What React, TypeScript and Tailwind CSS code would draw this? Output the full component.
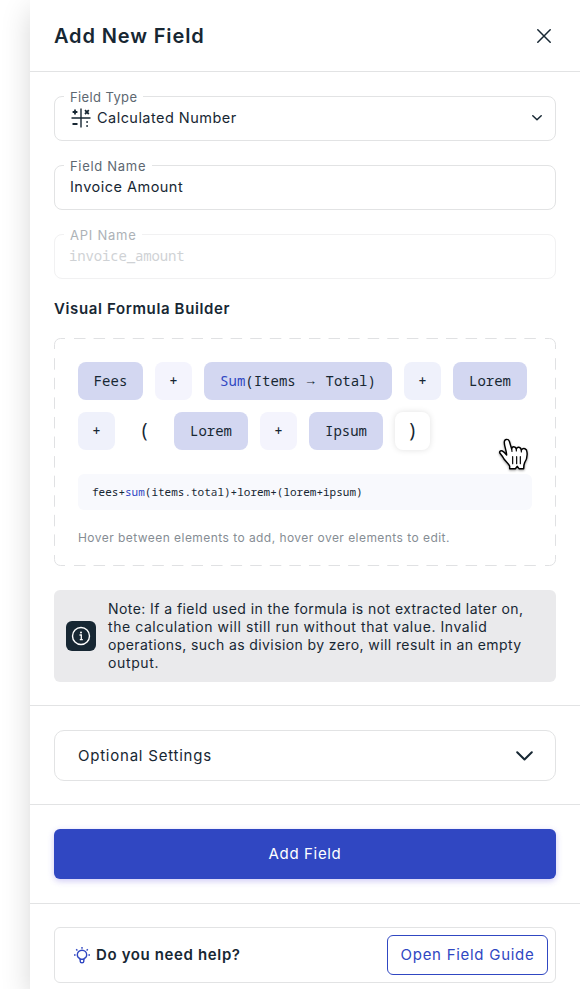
import type { ReactNode } from "react";

function CalcIcon() {
  return (
    <svg width="20" height="20" viewBox="0 0 20 20" fill="none" stroke="#172733" strokeWidth="1.4">
      <path d="M10 0.5V19.5M0.5 10H19.5" />
      <path d="M4 1.6V6.400M1.600 4H6.400M14 2.200L17.800 6M17.800 2.200L14 6M1.500 16H6.500" strokeWidth="1.8" />
      <path d="M15.200 14H17M15.200 18H17" strokeWidth="1.6" />
    </svg>
  );
}

function BulbIcon() {
  return (
    <svg width="16" height="17" viewBox="0 0 16 17" fill="none" stroke="#3047c2" strokeWidth="1.4">
      <path d="M6 12.2V11.6C4.3 10.8 3.3 9.4 3.3 7.9a4.7 4.7 0 0 1 9.4 0c0 1.500-1 2.900-2.700 3.700v0.600Z" />
      <path d="M6.200 12.500v1.700c0 1 .7 1.600 1.800 1.600s1.800-.6 1.800-1.600v-1.700" />
      <path d="M8 0V1.700M0 8H1.600M14.400 8H16M2.200 2.200L3.400 3.400M13.800 2.200L12.600 3.400" />
    </svg>
  );
}

function InfoIcon() {
  return (
    <svg width="20" height="20" viewBox="0 0 20 20" fill="none" stroke="#fff" strokeWidth="1.4">
      <circle cx="10" cy="10" r="8.500" />
      <path d="M8.500 9H10.300V13.500M8.800 13.700H11.800" strokeWidth="1.300" />
      <circle cx="10" cy="6.500" r="1" fill="#fff" stroke="none" />
    </svg>
  );
}

function HandCursor() {
  return (
    <svg className="absolute left-[436px] top-[92px] drop-shadow-[0_1px_1px_rgba(0,0,0,0.4)]" width="50" height="50" viewBox="0 0 150 150" fill="none" stroke="#000" strokeLinecap="round" strokeLinejoin="round">
      <path
        d="M59 116V108C54 99 46 93 42 87C38 80 35 76 30 70C27 65 31 61 37 63C42 65 46 70 50 75C50 62 42 48 43 36C43 26 55 26 58 34L65 57C66 48 76 48 79 57C82 49 92 50 94 60C100 52 111 56 111 67C113 82 109 90 104 98C101 104 101 108 101 116H87L82 109L76 116Z"
        fill="#fff"
        strokeWidth="4.300"
      />
      <path d="M79 57V63M94 60V66M65 57L66 64" strokeWidth="3.500" />
      <path d="M68 80V101M80 80V101M91 80V101" strokeWidth="3.500" />
    </svg>
  );
}

function DashedFrame() {
  return (
    <svg className="pointer-events-none absolute inset-0" width="502" height="228" viewBox="0 0 502 228" fill="none" stroke="#e0e1e3">
      <path d="M0.500 11V6.500A6 6 0 0 1 6.500 0.500H11M491 0.500H495.500A6 6 0 0 1 501.500 6.500V11M501.500 217V221.500A6 6 0 0 1 495.500 227.500H491M11 227.500H6.500A6 6 0 0 1 0.500 221.500V217" />
      <path d="M20 0.500H482M20 227.500H482M0.500 20.200V208M501.500 20.200V208" strokeDasharray="11.500 8.080" />
    </svg>
  );
}

function Field({ label, labelClass, faded, children }: { label: string; labelClass: string; faded?: boolean; children: ReactNode }) {
  return (
    <div className={`relative flex h-[45px] items-center rounded-lg border px-[15px] pb-0.5 ${faded ? "border-[#f1f1f2]" : "border-[#e2e3e4]"}`}>
      <span className={`absolute -top-[9px] left-[9px] bg-white px-1.5 text-[13px] leading-[19px] whitespace-nowrap ${faded ? "text-[#adb2b7]" : "text-[#5d6771]"} ${labelClass}`}>{label}</span>
      {children}
    </div>
  );
}

const mono = "font-['Noto_Sans_Mono','DejaVu_Sans_Mono',monospace]";

function Chip({ className, children }: { className: string; children: ReactNode }) {
  return <span className={`flex h-[38px] items-center justify-center rounded-lg whitespace-pre ${className}`}>{children}</span>;
}

export default function App() {
  return (
    <div className="h-[989px] w-[580px] overflow-hidden bg-white pl-[30px] font-['Inter','Liberation_Sans',sans-serif] text-[#172733]">
      <div className="h-full bg-white shadow-[0_10px_28px_rgba(0,0,0,0.16)]">
        <header className="flex h-[72px] items-center justify-between border-b border-[#e2e3e4] px-6">
          <h1 className="text-xl font-semibold tracking-[0.87px]">Add New Field</h1>
          <svg className="mr-[5px]" width="14" height="14" viewBox="0 0 14 14" stroke="#172733" strokeWidth="1.500" strokeLinecap="round">
            <path d="M0.800 0.800L13.200 13.200M13.200 0.800L0.800 13.200" />
          </svg>
        </header>

        <section className="flex h-[634px] flex-col border-b border-[#e2e3e4] px-6 pt-6">
          <div className="flex flex-col gap-6">
            <Field label="Field Type" labelClass="tracking-[0.38px]">
              <span className="ml-px"><CalcIcon /></span>
              <span className="ml-1.5 text-[14.5px] tracking-[0.46px]">Calculated Number</span>
              <svg className="mr-[-2px] ml-auto" width="10" height="6" viewBox="0 0 10 6" fill="none" stroke="#172733" strokeWidth="1.500" strokeLinecap="round" strokeLinejoin="round">
                <path d="M0.800 0.800L5 4.800L9.200 0.800" />
              </svg>
            </Field>
            <Field label="Field Name" labelClass="tracking-[0.7px]">
              <span className="text-[14.5px] tracking-[0.48px]">Invoice Amount</span>
            </Field>
            <Field label="API Name" labelClass="tracking-[0.75px]" faded>
              <span className={`-ml-px text-sm tracking-[-0.15px] text-[#cfd2d5] ${mono}`}>invoice_amount</span>
            </Field>
          </div>

          <h2 className="mt-[18px] text-[15px] leading-6 font-semibold tracking-[0.63px]">Visual Formula Builder</h2>

          <div className="relative mt-[17px] flex h-[228px] flex-col px-6 pt-6">
            <DashedFrame />
            <div className={`flex flex-col gap-3 ${mono}`}>
              <div className="flex gap-3">
                <Chip className="w-[65px] bg-[#d3d7f1] text-sm">Fees</Chip>
                <Chip className="w-[37px] bg-[#f4f4fd] text-sm font-medium">+</Chip>
                <Chip className="w-[188px] bg-[#d3d7f1] text-sm"><span className="text-[#3047c2]">Sum</span>(Items <span className="inline-block w-[13px] text-center font-['Liberation_Sans','DejaVu_Sans',sans-serif] text-[13px]">→</span> Total)</Chip>
                <Chip className="w-[37px] bg-[#eff1fb] text-sm font-medium">+</Chip>
                <Chip className="w-[74px] bg-[#d3d7f1] text-sm">Lorem</Chip>
              </div>
              <div className="flex gap-3">
                <Chip className="w-[37px] bg-[#eff1fb] text-sm font-medium">+</Chip>
                <Chip className="w-[35px] pb-0.5 text-[19px]">(</Chip>
                <Chip className="w-[74px] bg-[#d3d7f1] text-sm">Lorem</Chip>
                <Chip className="w-[37px] bg-[#f4f4fd] text-sm font-medium">+</Chip>
                <Chip className="w-[74px] bg-[#d3d7f1] text-sm">Ipsum</Chip>
                <Chip className="w-[35px] bg-white pb-0.5 text-[19px] shadow-[0_0_6px_rgba(0,0,0,0.12)]">)</Chip>
              </div>
            </div>
            <div className={`mt-6 flex h-9 items-center rounded-md bg-[#f8f9fd] px-3.5 text-[11px] ${mono}`}>
              fees+<span className="text-[#3047c2]">sum</span>(items.total)+lorem+(lorem+ipsum)
            </div>
            <p className="mt-[19px] text-xs leading-[18px] tracking-[0.45px] whitespace-nowrap text-[#868d94]">Hover between elements to add, hover over elements to edit.</p>
            <HandCursor />
          </div>

          <div className="mt-6 flex h-[92px] items-center gap-3 rounded-md bg-[#eaeaec] px-3">
            <span className="flex size-[30px] shrink-0 items-center justify-center rounded-md bg-[#172733]"><InfoIcon /></span>
            <p className="text-sm leading-[18px] whitespace-nowrap">
              <span className="block tracking-[0.43px]">Note: If a field used in the formula is not extracted later on,</span>
              <span className="block tracking-[0.57px]">the calculation will still run without that value. Invalid</span>
              <span className="block tracking-[0.4px]">operations, such as division by zero, will result in an empty</span>
              <span className="block tracking-[0.63px]">output.</span>
            </p>
          </div>
        </section>

        <section className="flex h-[99px] items-center border-b border-[#e2e3e4] px-6">
          <div className="flex h-[51px] w-full items-center justify-between rounded-[10px] border border-[#e2e3e4] pr-[22px] pl-[23px]">
            <span className="pt-0.5 text-[15px] tracking-[0.77px]">Optional Settings</span>
            <svg className="mt-px" width="17" height="10" viewBox="0 0 17 10" fill="none" stroke="#172733" strokeWidth="2" strokeLinecap="round" strokeLinejoin="round">
              <path d="M1.200 1.200L8.500 8.500L15.800 1.200" />
            </svg>
          </div>
        </section>

        <section className="border-b border-[#e2e3e4] px-6 py-6">
          <button className="flex h-[50px] w-full items-center justify-center rounded-md bg-[#3047c2] text-[15px] tracking-[0.65px] text-white shadow-[0_2px_6px_rgba(80,60,220,0.28)]">Add Field</button>
        </section>

        <section className="px-6 pt-[23px]">
          <div className="flex h-[56px] items-center rounded-md border border-[#e2e3e4] pr-[7px] pl-[19px]">
            <BulbIcon />
            <span className="ml-1.5 pt-px text-[15px] font-semibold tracking-[0.63px]">Do you need help?</span>
            <button className="ml-auto flex h-10 w-[161px] items-center justify-center rounded-md border border-[#3047c2] text-[15px] tracking-[0.72px] whitespace-nowrap text-[#3047c2]">Open Field Guide</button>
          </div>
        </section>
      </div>
    </div>
  );
}
